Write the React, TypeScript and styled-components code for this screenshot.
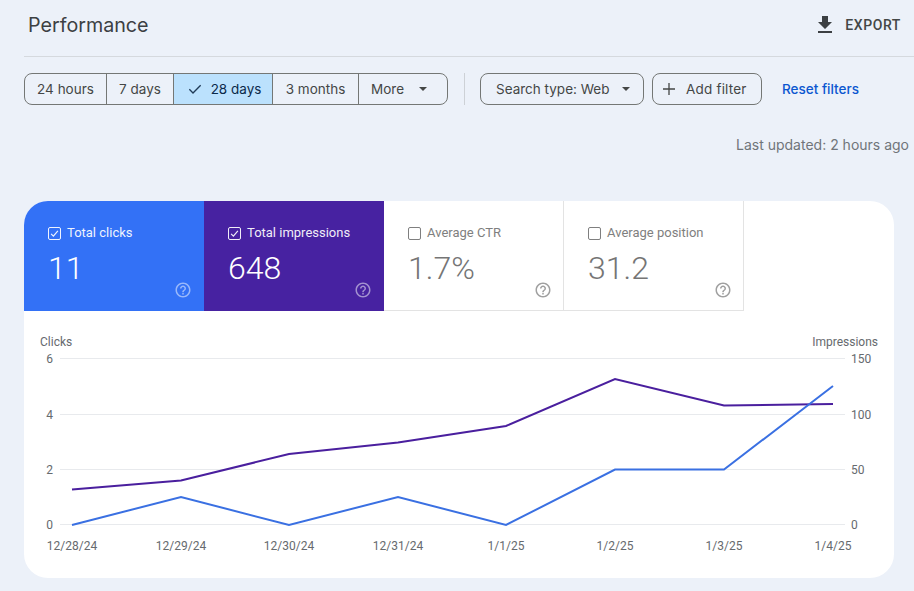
import React from "react";
import styled, { createGlobalStyle } from "styled-components";

const Global = createGlobalStyle`
  html, body { margin: 0; padding: 0; background: #ecf1f9; }
  body { width: 914px; height: 591px; overflow: hidden; font-family: Inter, "Liberation Sans", sans-serif; }
`;

const Page = styled.div`
  width: 914px;
  height: 591px;
  box-sizing: border-box;
  padding-left: 24px;
  background: #ecf1f9;
`;

const Header = styled.header`
  height: 57px;
  box-sizing: border-box;
  border-bottom: 1px solid #d5d9de;
  display: flex;
  align-items: center;
  justify-content: space-between;
  padding: 0 13px 7px 4px;
`;

const Title = styled.h1`
  margin: 0;
  font-size: 19.7px;
  font-weight: 400;
  color: #3c4043;
`;

const ExportButton = styled.div`
  display: flex;
  align-items: center;
  gap: 8px;
  font-family: Roboto, sans-serif;
  font-size: 14px;
  font-weight: 500;
  letter-spacing: 0.6px;
  color: #444746;
`;

const Toolbar = styled.div`
  display: flex;
  align-items: center;
  margin-top: 16px;
  height: 32px;
`;

const Segments = styled.div`
  display: flex;
  height: 32px;
  box-sizing: border-box;
  border: 1px solid #747775;
  border-radius: 8px;
  overflow: hidden;
`;

const Segment = styled.div<{ $w: number; $on?: boolean; $pr?: number; $pl?: number }>`
  width: ${(p) => p.$w}px;
  box-sizing: border-box;
  padding-right: ${(p) => p.$pr || 0}px;
  padding-left: ${(p) => p.$pl || 0}px;
  display: flex;
  align-items: center;
  justify-content: center;
  gap: 8px;
  font-size: 13.5px;
  color: ${(p) => (p.$on ? "#0b2a4a" : "#444746")};
  background: ${(p) => (p.$on ? "#bbe1fd" : "transparent")};
  & + & { border-left: 1px solid #747775; }
`;

const Divider = styled.div`
  width: 1px;
  height: 32px;
  background: #cdd1d6;
  margin: 0 15px 0 16px;
`;

const Chip = styled.div<{ $w: number }>`
  width: ${(p) => p.$w}px;
  height: 32px;
  box-sizing: border-box;
  border: 1px solid #747775;
  border-radius: 8px;
  display: flex;
  align-items: center;
  justify-content: flex-start;
  padding-left: 15px;
  margin-right: 8px;
  font-size: 13.5px;
  color: #444746;
`;

const AddChip = styled(Chip)`
  padding-left: 7px;
  gap: 8px;
  letter-spacing: 0.2px;
`;

const Caret = styled.span<{ $w: number; $ml: number }>`
  width: 0;
  height: 0;
  margin-left: ${(p) => p.$ml}px;
  border-left: ${(p) => p.$w}px solid transparent;
  border-right: ${(p) => p.$w}px solid transparent;
  border-top: ${(p) => p.$w}px solid #444746;
`;

const ResetLink = styled.a`
  margin-left: 12px;
  font-size: 13.5px;
  font-weight: 500;
  color: #0b57d0;
`;

const Updated = styled.div`
  margin-top: 30px;
  padding-right: 5px;
  text-align: right;
  font-size: 14px;
  line-height: 20px;
  color: #70757a;
`;

const Card = styled.section`
  margin-top: 46px;
  width: 870px;
  height: 377px;
  background: #fff;
  border-radius: 24px;
  overflow: hidden;
`;

const Tiles = styled.div`
  display: flex;
  height: 110px;
`;

const Tile = styled.div<{ $bg?: string }>`
  width: 180px;
  box-sizing: border-box;
  padding: 23px ${(p) => (p.$bg ? 12 : 11)}px ${(p) => (p.$bg ? 12 : 11)}px 24px;
  background: ${(p) => p.$bg || "#fff"};
  color: ${(p) => (p.$bg ? "#fff" : "#757575")};
  border-right: ${(p) => (p.$bg ? "0" : "1px solid #e3e3e3")};
  border-bottom: ${(p) => (p.$bg ? "0" : "1px solid #e3e3e3")};
  font-family: Roboto, sans-serif;
  display: flex;
  flex-direction: column;
`;

const TileLabel = styled.div`
  display: flex;
  align-items: center;
  gap: 6px;
  height: 16px;
  font-size: 13px;
  opacity: 0.92;
`;

const Box = styled.span`
  width: 13px;
  height: 13px;
  margin-top: 2px;
  box-sizing: border-box;
  border: 1px solid currentColor;
  border-radius: 2px;
  display: flex;
  align-items: center;
  justify-content: center;
  flex: none;
`;

const ValueRow = styled.div`
  display: flex;
  justify-content: space-between;
  align-items: flex-end;
  margin-top: 10px;
  flex: 1;
`;

const Value = styled.div`
  align-self: flex-start;
  font-size: 32px;
  line-height: 36px;
  font-weight: 300;
  color: inherit;
`;

const HelpIcon = styled.svg<{ $light?: boolean }>`
  width: 18px;
  height: 18px;
  fill: ${(p) => (p.$light ? "rgba(255,255,255,0.5)" : "#a0a0a0")};
  display: block;
`;

const ChartSvg = styled.svg`
  display: block;
  font-family: Roboto, sans-serif;
  font-size: 12px;
  fill: #666a6e;
`;

const Help = ({ light }: { light?: boolean }) => (
  <HelpIcon $light={light} viewBox="0 0 24 24">
    <path d="M11 18h2v-2h-2v2zm1-16C6.48 2 2 6.48 2 12s4.48 10 10 10 10-4.48 10-10S17.52 2 12 2zm0 18c-4.41 0-8-3.59-8-8s3.59-8 8-8 8 3.59 8 8-3.59 8-8 8zm0-14c-2.21 0-4 1.79-4 4h2c0-1.1.9-2 2-2s2 .9 2 2c0 2-3 1.75-3 5h2c0-2.25 3-2.5 3-5 0-2.21-1.79-4-4-4z" />
  </HelpIcon>
);

const tiles = [
  { label: "Total clicks", value: "11", bg: "#3371f6", on: true },
  { label: "Total impressions", value: "648", bg: "#4722a1", on: true },
  { label: "Average CTR", value: "1.7%" },
  { label: "Average position", value: "31.2" },
];

const ox = 24;
const oy = 311;
const xs = [72, 181, 289, 398, 506, 615, 724, 833];
const dates = ["12/28/24", "12/29/24", "12/30/24", "12/31/24", "1/1/25", "1/2/25", "1/3/25", "1/4/25"];
const purple = [489.5, 480.5, 454, 442.5, 426, 379, 405.5, 404];
const blue = [525, 497, 525, 497, 525, 469.5, 469.5, 386];
const grid = [
  { y: 358.5, l: "6", r: "150" },
  { y: 414.5, l: "4", r: "100" },
  { y: 469.5, l: "2", r: "50" },
  { y: 524.5, l: "0", r: "0" },
];
const pts = (ys: number[]) => ys.map((y, i) => `${xs[i] - ox},${y - oy}`).join(" ");

export default function App() {
  return (
    <Page>
      <Global />
      <Header>
        <Title>Performance</Title>
        <ExportButton>
          <svg width="24" height="24" viewBox="0 0 24 24" fill="#3c4043">
            <path d="M19 9h-4V3H9v6H5l7 7 7-7zM5 18v2h14v-2H5z" />
          </svg>
          EXPORT
        </ExportButton>
      </Header>
      <Toolbar>
        <Segments>
          <Segment $w={81}>24 hours</Segment>
          <Segment $w={67}>7 days</Segment>
          <Segment $w={99} $on $pl={2}>
            <svg width="16" height="16" viewBox="0 0 24 24" fill="none" stroke="#1f3a56" strokeWidth="2">
              <path d="M3.5 12.5l5.5 5.5L20.5 6.5" />
            </svg>
            28 days
          </Segment>
          <Segment $w={86}>3 months</Segment>
          <Segment $w={89} $pr={8}>
            More
            <Caret $w={4.5} $ml={7} />
          </Segment>
        </Segments>
        <Divider />
        <Chip $w={164}>
          Search type: Web
          <Caret $w={4} $ml={13} />
        </Chip>
        <AddChip $w={110}>
          <svg width="18" height="18" viewBox="0 0 18 18" fill="none" stroke="#444746" strokeWidth="1.3">
            <path d="M3 9h12M9 3v12" />
          </svg>
          Add filter
        </AddChip>
        <ResetLink>Reset filters</ResetLink>
      </Toolbar>
      <Updated>Last updated: 2 hours ago</Updated>
      <Card>
        <Tiles>
          {tiles.map((t) => (
            <Tile key={t.label} $bg={t.bg}>
              <TileLabel>
                <Box>
                  {t.on && (
                    <svg width="9" height="9" viewBox="0 0 12 12" fill="none" stroke="#fff" strokeWidth="1.6">
                      <path d="M1.5 6.5l3 3 6-7" />
                    </svg>
                  )}
                </Box>
                {t.label}
              </TileLabel>
              <ValueRow>
                <Value>{t.value}</Value>
                <Help light={!!t.bg} />
              </ValueRow>
            </Tile>
          ))}
        </Tiles>
        <ChartSvg width="870" height="267" viewBox="0 0 870 267">
          <text x={16} y={35}>Clicks</text>
          <text x={854} y={35} textAnchor="end">Impressions</text>
          {grid.map((g) => (
            <g key={g.y}>
              <line x1={36} x2={821} y1={g.y - oy} y2={g.y - oy} stroke="#e8eaed" strokeWidth={1} />
              <text x={29} y={g.y - oy + 4} textAnchor="end">{g.l}</text>
              <text x={827} y={g.y - oy + 4}>{g.r}</text>
            </g>
          ))}
          {dates.map((d, i) => (
            <text key={d} x={xs[i] - ox} y={239} textAnchor="middle">{d}</text>
          ))}
          <polyline points={pts(purple)} fill="none" stroke="#4a1f9e" strokeWidth={2} />
          <polyline points={pts(blue)} fill="none" stroke="#3a70e2" strokeWidth={2} />
        </ChartSvg>
      </Card>
    </Page>
  );
}
